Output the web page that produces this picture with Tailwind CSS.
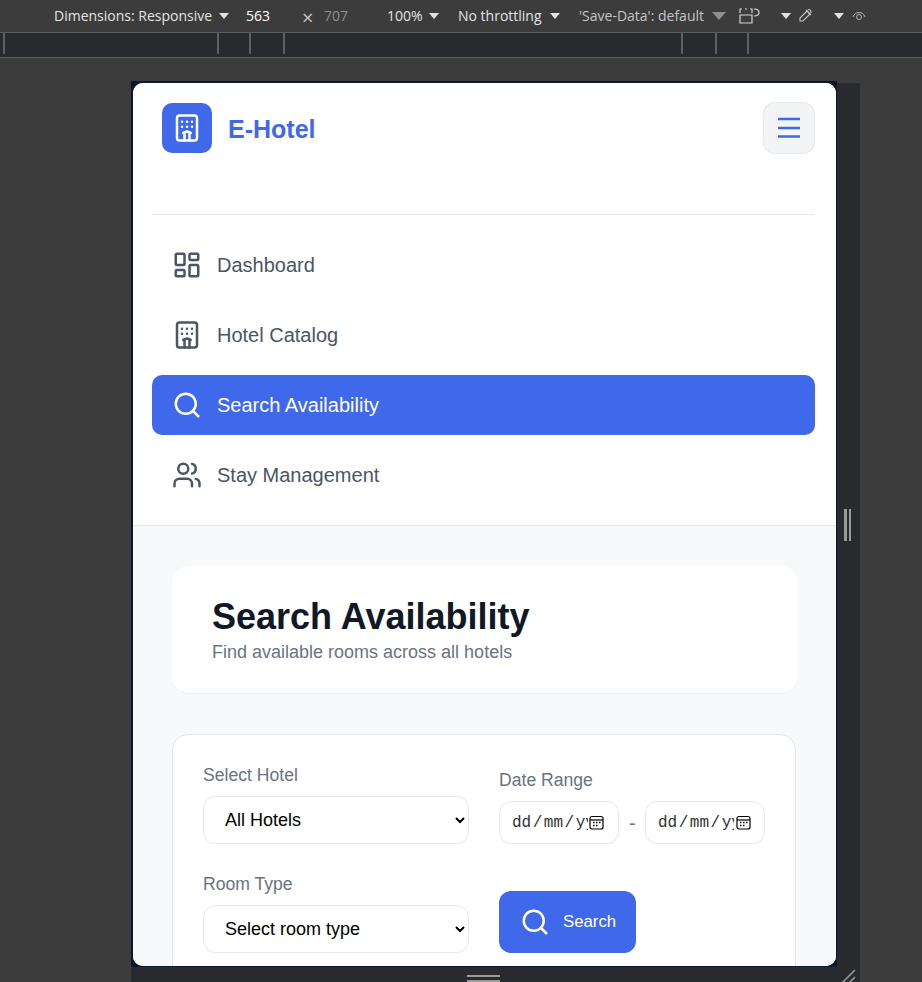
<!DOCTYPE html>
<html lang="en">
<head>
    <meta charset="UTF-8">
    <meta name="viewport" content="width=device-width, initial-scale=1.0">
    <title>E-Hotel</title>
    <script src="https://cdn.jsdelivr.net/npm/@tailwindcss/browser@4"></script>
</head>
<body class="bg-[#3c3c3c] h-[982px] overflow-hidden font-['Liberation_Sans',sans-serif]">

    <!-- devtools toolbar -->
    <div class="h-[33px] border-b border-[#5f5f5f] flex items-center pl-[54px] pb-[1px] text-[14px] text-[#e3e3e3] font-['Open_Sans',sans-serif] whitespace-nowrap">
        <span class="w-[159px]">Dimensions: Responsive</span>
        <span class="ml-[6px] w-0 h-0 border-x-[5px] border-x-transparent border-t-[6px] border-t-[#e3e3e3]"></span>
        <span class="ml-[17px] w-[25px] text-white">563</span>
        <span class="ml-[31px] w-[10px] text-[#c7c7c7] text-[20px] leading-none mt-[4px]">×</span>
        <span class="ml-[12px] w-[24px] text-[#8f8f8f]">707</span>
        <span class="ml-[39px] w-[36px]">100%</span>
        <span class="ml-[6px] w-0 h-0 border-x-[5px] border-x-transparent border-t-[6px] border-t-[#e3e3e3]"></span>
        <span class="ml-[19px] w-[86px]">No throttling</span>
        <span class="ml-[6px] w-0 h-0 border-x-[5px] border-x-transparent border-t-[6px] border-t-[#e3e3e3]"></span>
        <span class="ml-[19px] w-[128px] text-[#c4c4c4]">'Save-Data': default</span>
        <span class="ml-[5px] w-0 h-0 border-x-[7px] border-x-transparent border-t-[8px] border-t-[#8f8f8f]"></span>
        <svg class="ml-[13px]" width="22" height="16" viewBox="0 0 22 16" fill="none" stroke="#d5d5d5" stroke-width="1.200"><path d="M1 7h12v8H1z"/><path d="M1 5V1h2M6 1h2M11 1h2v4" /><path d="M15 1c4 0 5 1.500 5 3.500S18.500 8 15 8"/></svg>
        <span class="ml-[20px] w-0 h-0 border-x-[5px] border-x-transparent border-t-[6px] border-t-[#e3e3e3]"></span>
        <svg class="ml-[7px]" width="15" height="15" viewBox="0 0 15 15" fill="none" stroke="#c4c4c4" stroke-width="1.100"><path d="M9 3l3 3-7 7H2v-3z"/><path d="M8 2l5 5M10 2c1-1.500 3.500 1 3 3"/></svg>
        <span class="ml-[21px] w-0 h-0 border-x-[5px] border-x-transparent border-t-[6px] border-t-[#e3e3e3]"></span>
        <svg class="ml-[8px]" width="14" height="12" viewBox="0 0 14 12" fill="none" stroke="#b4b4b4" stroke-width="1"><path d="M1 7c1.500-6 10.500-6 12 0"/><circle cx="7" cy="7" r="2.500"/></svg>
    </div>

    <!-- ruler -->
    <div class="h-[25px] border-b border-[#5f5f5f] bg-[#292a2d] relative">
        <span class="absolute top-0 left-[3px] w-[2px] h-[21px] bg-[#5f5f5f]"></span>
        <span class="absolute top-0 left-[217px] w-[2px] h-[21px] bg-[#5f5f5f]"></span>
        <span class="absolute top-0 left-[249px] w-[2px] h-[21px] bg-[#5f5f5f]"></span>
        <span class="absolute top-0 left-[283px] w-[2px] h-[21px] bg-[#5f5f5f]"></span>
        <span class="absolute top-0 left-[681px] w-[2px] h-[21px] bg-[#5f5f5f]"></span>
        <span class="absolute top-0 left-[715px] w-[2px] h-[21px] bg-[#5f5f5f]"></span>
        <span class="absolute top-0 left-[747px] w-[2px] h-[21px] bg-[#5f5f5f]"></span>
    </div>

    <!-- emulated device area -->
    <div class="ml-[131px] mt-[23px] w-[729px] h-[901px] bg-[#292a2d] relative">
        <span class="absolute left-[706px] top-0 w-[23px] h-[2px] bg-[#3c3c3c]"></span>
        <div class="w-[706px] h-[886px] bg-[#0d1630] pl-[2px] pt-[2px]">
            <div class="w-[703px] h-[883px] bg-white rounded-[10px] overflow-hidden">

                <!-- sidebar -->
                <div class="h-[443px] pl-[19px] pr-[21px] border-b border-[#e5e7eb] bg-white">
                    <div class="h-[132px] border-b border-[#e5e7eb] flex items-start justify-between pt-[19px] pl-[10px]">
                        <div class="flex items-center gap-[16px] mt-[1px]">
                            <div class="w-[50px] h-[50px] rounded-[10px] bg-[#3f68ea] flex items-center justify-center">
                                <svg width="30" height="30" viewBox="0 0 24 24" fill="none" stroke="white" stroke-width="2" stroke-linecap="round" stroke-linejoin="round"><path d="M10 22v-6.570"/><path d="M12 11h.01"/><path d="M12 7h.01"/><path d="M14 15.430V22"/><path d="M15 16a5 5 0 0 0-6 0"/><path d="M16 11h.01"/><path d="M16 7h.01"/><path d="M8 11h.01"/><path d="M8 7h.01"/><rect x="4" y="2" width="16" height="20" rx="2"/></svg>
                            </div>
                            <span class="text-[25px] leading-[30px] pt-[2px] font-bold text-[#3f68ea]">E-Hotel</span>
                        </div>
                        <button class="w-[52px] h-[52px] bg-[#f3f4f6] border border-[#e5e7eb] rounded-[12px] flex items-center justify-center">
                            <svg width="28" height="28" viewBox="0 0 28 28" fill="none" stroke="#3f68ea" stroke-width="2.400"><path d="M3 5h22M3 14h22M3 22.500h22"/></svg>
                        </button>
                    </div>

                    <nav class="mt-[20px] flex flex-col gap-[10px] text-[20px]">
                        <a class="h-[60px] rounded-[10px] flex items-center gap-[15px] pl-[20px] text-[#4b5563]">
                            <svg width="30" height="30" viewBox="0 0 24 24" fill="none" stroke="#4b5563" stroke-width="2" stroke-linecap="round" stroke-linejoin="round"><rect x="3" y="3" width="7" height="9" rx="1"/><rect x="14" y="3" width="7" height="5" rx="1"/><rect x="14" y="12" width="7" height="9" rx="1"/><rect x="3" y="16" width="7" height="5" rx="1"/></svg>
                            Dashboard
                        </a>
                        <a class="h-[60px] rounded-[10px] flex items-center gap-[15px] pl-[20px] text-[#4b5563]">
                            <svg width="30" height="30" viewBox="0 0 24 24" fill="none" stroke="#4b5563" stroke-width="2" stroke-linecap="round" stroke-linejoin="round"><path d="M10 22v-6.570"/><path d="M12 11h.01"/><path d="M12 7h.01"/><path d="M14 15.430V22"/><path d="M15 16a5 5 0 0 0-6 0"/><path d="M16 11h.01"/><path d="M16 7h.01"/><path d="M8 11h.01"/><path d="M8 7h.01"/><rect x="4" y="2" width="16" height="20" rx="2"/></svg>
                            Hotel Catalog
                        </a>
                        <a class="h-[60px] rounded-[10px] flex items-center gap-[15px] pl-[20px] bg-[#3f68ea] text-white">
                            <svg width="30" height="30" viewBox="0 0 24 24" fill="none" stroke="white" stroke-width="2" stroke-linecap="round" stroke-linejoin="round"><circle cx="11" cy="11" r="8"/><path d="m21 21-4.300-4.300"/></svg>
                            Search Availability
                        </a>
                        <a class="h-[60px] rounded-[10px] flex items-center gap-[15px] pl-[20px] text-[#4b5563]">
                            <svg width="30" height="30" viewBox="0 0 24 24" fill="none" stroke="#4b5563" stroke-width="2" stroke-linecap="round" stroke-linejoin="round"><path d="M16 21v-2a4 4 0 0 0-4-4H6a4 4 0 0 0-4 4v2"/><circle cx="9" cy="7" r="4"/><path d="M22 21v-2a4 4 0 0 0-3-3.870"/><path d="M16 3.130a4 4 0 0 1 0 7.750"/></svg>
                            Stay Management
                        </a>
                    </nav>
                </div>

                <!-- main -->
                <div class="h-[440px] bg-[#f8f9fb] pl-[39px] pt-[40px]">
                    <div class="w-[625px] h-[128px] bg-white border-b border-[#eceef1] rounded-[16px] pl-[40px] pt-[29px]">
                        <h1 class="text-[36px] leading-[44px] font-bold text-[#111827]">Search Availability</h1>
                        <p class="text-[18px] leading-[24px] mt-[1px] text-[#6b7280]">Find available rooms across all hotels</p>
                    </div>

                    <div class="mt-[40px] w-[624px] h-[300px] bg-white border border-[#e5e7eb] rounded-[16px] p-[30px] grid grid-cols-[266px_266px] gap-x-[30px] gap-y-[30px] items-end content-start">
                        <div>
                            <label class="block text-[17.600px] leading-[20px] text-[#6b7280] mb-[11px]">Select Hotel</label>
                            <select class="w-full h-[48px] pl-[17px] bg-white border border-[#e5e7eb] rounded-[12px] text-[18px] text-black">
                                <option>All Hotels</option>
                            </select>
                        </div>
                        <div>
                            <label class="block text-[17.600px] leading-[20px] text-[#6b7280] mb-[11px]">Date Range</label>
                            <div class="flex items-center gap-[10px]">
                                <div class="w-[120px] h-[43px] border border-[#e5e7eb] rounded-[12px] flex items-center pl-[12px]">
                                    <span class="w-[76px] mr-[1px] overflow-hidden whitespace-nowrap text-[16px] text-[#333] font-['Liberation_Mono',monospace]">dd<span class="mx-[1.500px]">/</span>mm<span class="mx-[1.500px]">/</span>yy</span>
                                    <svg class="shrink-0" width="15" height="15" viewBox="0 0 15 15" fill="none" stroke="black" stroke-width="1.200"><rect x="1" y="1.500" width="13" height="12.500" rx="2"/><path d="M1 5h13"/><path d="M4 7.500h1.500M7 7.500h1.500M10 7.500h1.500M4 10.500h1.500M7 10.500h1.500" stroke-width="1.500"/></svg>
                                </div>
                                <span class="w-[6px] text-[20px] text-[#6b7280]">-</span>
                                <div class="w-[120px] h-[43px] border border-[#e5e7eb] rounded-[12px] flex items-center pl-[12px]">
                                    <span class="w-[76px] mr-[2px] overflow-hidden whitespace-nowrap text-[16px] text-[#333] font-['Liberation_Mono',monospace]">dd<span class="mx-[1.500px]">/</span>mm<span class="mx-[1.500px]">/</span>yy</span>
                                    <svg class="shrink-0" width="15" height="15" viewBox="0 0 15 15" fill="none" stroke="black" stroke-width="1.200"><rect x="1" y="1.500" width="13" height="12.500" rx="2"/><path d="M1 5h13"/><path d="M4 7.500h1.500M7 7.500h1.500M10 7.500h1.500M4 10.500h1.500M7 10.500h1.500" stroke-width="1.500"/></svg>
                                </div>
                            </div>
                        </div>
                        <div>
                            <label class="block text-[17.600px] leading-[20px] text-[#6b7280] mb-[11px]">Room Type</label>
                            <select class="w-full h-[48px] pl-[17px] bg-white border border-[#e5e7eb] rounded-[12px] text-[18px] text-black">
                                <option>Select room type</option>
                            </select>
                        </div>
                        <button class="w-[137px] h-[62px] bg-[#3f68ea] rounded-[12px] flex items-center gap-[13px] pl-[21px] text-white text-[16.800px]">
                            <svg width="30" height="30" viewBox="0 0 24 24" fill="none" stroke="white" stroke-width="2" stroke-linecap="round" stroke-linejoin="round"><circle cx="11" cy="11" r="8"/><path d="m21 21-4.300-4.300"/></svg>
                            Search
                        </button>
                    </div>
                </div>
            </div>
        </div>

        <!-- resize handles -->
        <span class="absolute left-[713px] top-[428px] w-[3px] h-[32px] bg-[#9a9a9a]"></span>
        <span class="absolute left-[718px] top-[428px] w-[2px] h-[32px] bg-[#9a9a9a]"></span>
        <span class="absolute left-[336px] top-[894px] w-[33px] h-[2px] bg-[#9a9a9a]"></span>
        <span class="absolute left-[336px] top-[899px] w-[33px] h-[2px] bg-[#9a9a9a]"></span>
        <svg class="absolute left-[709px] top-[888px]" width="16" height="13" viewBox="0 0 16 13" fill="none" stroke="#9a9a9a" stroke-width="1.500"><path d="M2 14L15 1M9 14l6-6"/></svg>
    </div>

</body>
</html>
